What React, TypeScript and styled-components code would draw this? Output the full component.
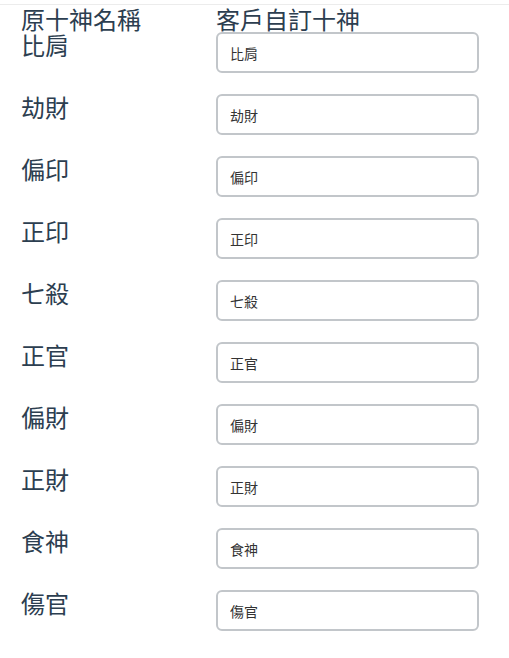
import React from 'react';
import styled, { createGlobalStyle } from 'styled-components';

const GlobalStyle = createGlobalStyle`
  body {
    margin: 0;
    background: #fff;
    font-family: "Noto Sans CJK TC", "Noto Sans", sans-serif;
    color: #2c3e50;
  }
`;

const Page = styled.div`
  width: 509px;
  margin-top: 4px;
  border-top: 1px solid #ececec;
  padding: 2px 0 0 21px;
  box-sizing: border-box;
`;

const Row = styled.div<{ $header?: boolean }>`
  display: grid;
  grid-template-columns: 195px 263px;
  align-items: start;
  height: ${({ $header }) => ($header ? '25px' : '62px')};
`;

const Label = styled.div<{ $header?: boolean }>`
  font-size: 24px;
  line-height: 24px;
  color: #2c3e50;
  padding-top: ${({ $header }) => ($header ? '0' : '1px')};
`;

const Field = styled.input`
  width: 263px;
  height: 41px;
  box-sizing: border-box;
  border: 2px solid #c2c6ca;
  border-radius: 6px;
  padding: 0 12px;
  font-family: "Noto Sans CJK TC", "Noto Sans", sans-serif;
  font-size: 14px;
  color: #333;
  background: #fff;
  outline: none;
`;

const gods = ['比肩', '劫財', '偏印', '正印', '七殺', '正官', '偏財', '正財', '食神', '傷官'];

export default function App() {
  return (
    <>
      <GlobalStyle />
      <Page>
        <Row $header>
          <Label $header>原十神名稱</Label>
          <Label $header>客戶自訂十神</Label>
        </Row>
        {gods.map((g) => (
          <Row key={g}>
            <Label>{g}</Label>
            <Field defaultValue={g} />
          </Row>
        ))}
      </Page>
    </>
  );
}
